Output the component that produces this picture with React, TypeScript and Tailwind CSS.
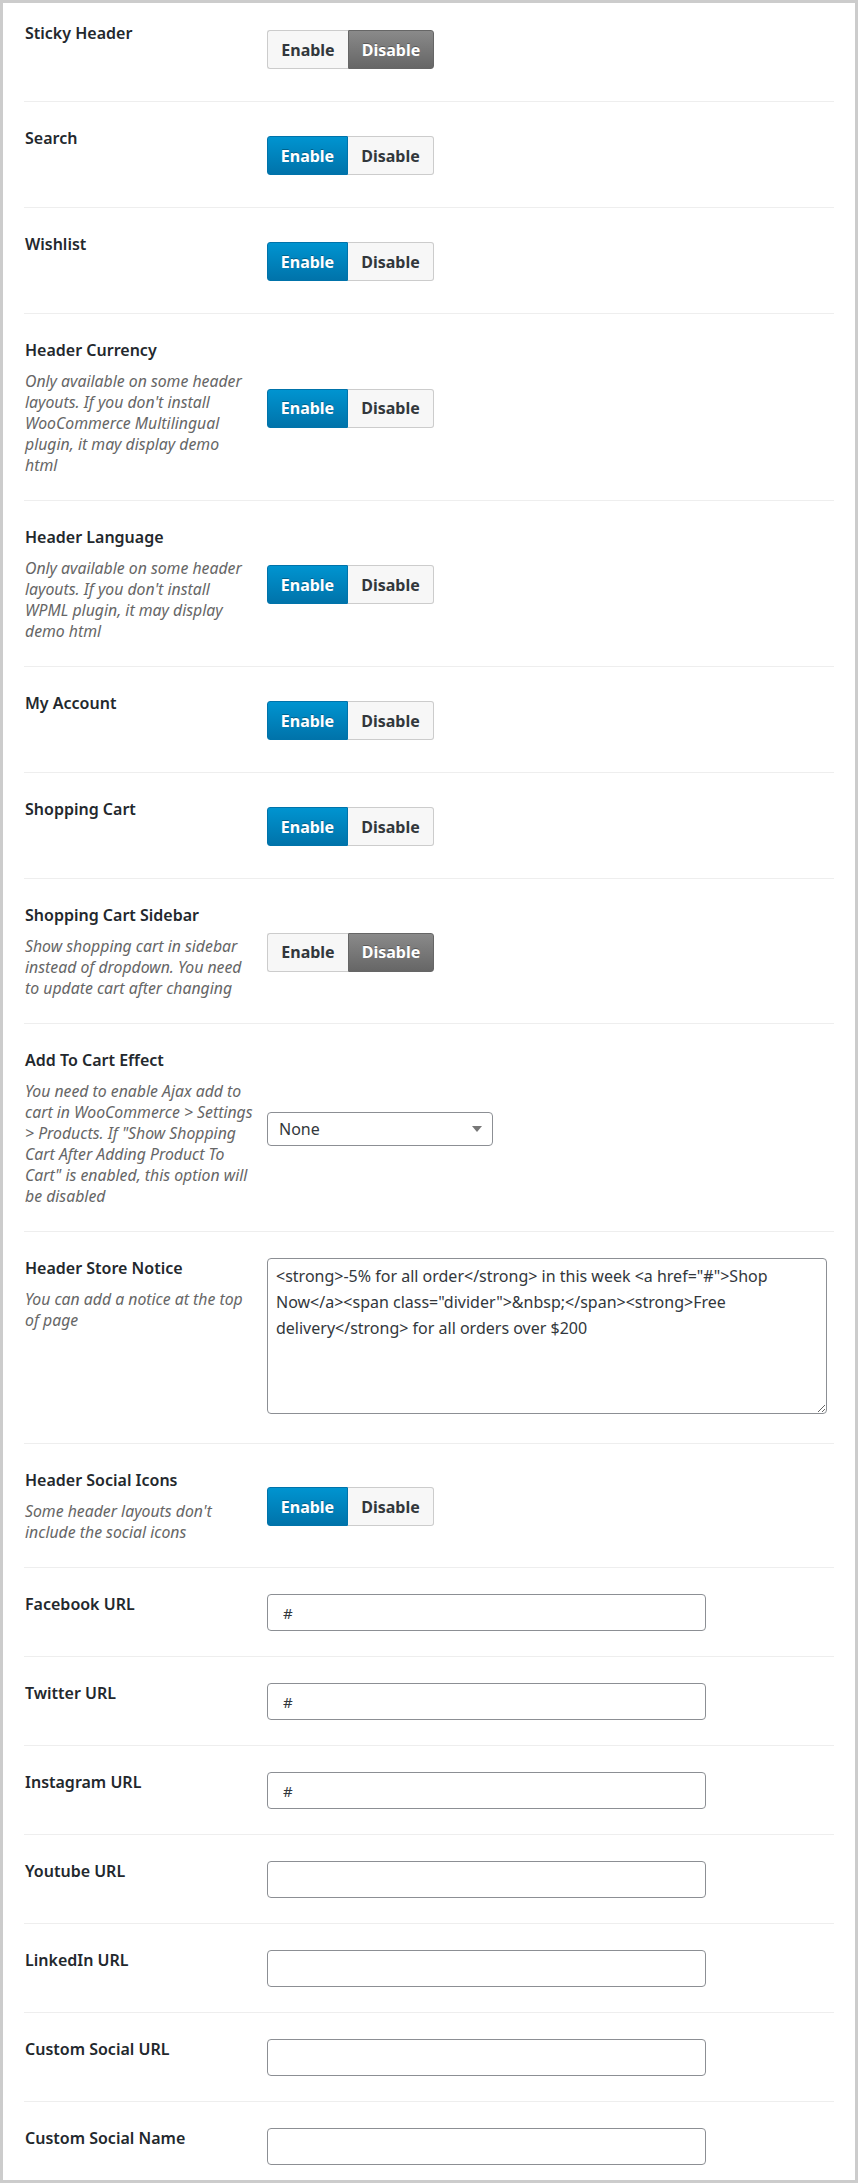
import type { ReactNode } from "react";

type Toggle = "enable" | "disable";

type Row =
  | { kind: "toggle"; label: string; desc?: string; value: Toggle }
  | { kind: "select"; label: string; desc?: string; value: string }
  | { kind: "textarea"; label: string; desc?: string; value: string }
  | { kind: "text"; label: string; desc?: string; value: string };

const ROWS: Row[] = [
  { kind: "toggle", label: "Sticky Header", value: "disable" },
  { kind: "toggle", label: "Search", value: "enable" },
  { kind: "toggle", label: "Wishlist", value: "enable" },
  {
    kind: "toggle",
    label: "Header Currency",
    desc: "Only available on some header layouts. If you don't install WooCommerce Multilingual plugin, it may display demo html",
    value: "enable",
  },
  {
    kind: "toggle",
    label: "Header Language",
    desc: "Only available on some header layouts. If you don't install WPML plugin, it may display demo html",
    value: "enable",
  },
  { kind: "toggle", label: "My Account", value: "enable" },
  { kind: "toggle", label: "Shopping Cart", value: "enable" },
  {
    kind: "toggle",
    label: "Shopping Cart Sidebar",
    desc: "Show shopping cart in sidebar instead of dropdown. You need to update cart after changing",
    value: "disable",
  },
  {
    kind: "select",
    label: "Add To Cart Effect",
    desc: 'You need to enable Ajax add to cart in WooCommerce > Settings > Products. If "Show Shopping Cart After Adding Product To Cart" is enabled, this option will be disabled',
    value: "None",
  },
  {
    kind: "textarea",
    label: "Header Store Notice",
    desc: "You can add a notice at the top of page",
    value:
      '<strong>-5% for all order</strong> in this week <a href="#">Shop Now</a><span class="divider">&nbsp;</span><strong>Free delivery</strong> for all orders over $200',
  },
  {
    kind: "toggle",
    label: "Header Social Icons",
    desc: "Some header layouts don't include the social icons",
    value: "enable",
  },
  { kind: "text", label: "Facebook URL", value: "#" },
  { kind: "text", label: "Twitter URL", value: "#" },
  { kind: "text", label: "Instagram URL", value: "#" },
  { kind: "text", label: "Youtube URL", value: "" },
  { kind: "text", label: "LinkedIn URL", value: "" },
  { kind: "text", label: "Custom Social URL", value: "" },
  { kind: "text", label: "Custom Social Name", value: "" },
];

function ToggleGroup({ value }: { value: Toggle }) {
  const base =
    "flex h-[39px] items-center justify-center border text-[16px] font-bold";
  const off = "border-[#cccccc] bg-[#f7f7f7] text-[#32373c]";
  const shadow = "[text-shadow:0_-1px_0_rgba(0,0,0,0.3)]";
  return (
    <div className="my-2 flex">
      <span
        className={`${base} w-[81px] rounded-l-[3px] ${
          value === "enable"
            ? `border-[#0073aa] bg-gradient-to-b from-[#0094d0] to-[#0073aa] text-white ${shadow}`
            : `${off} border-r-0`
        }`}
      >
        Enable
      </span>
      <span
        className={`${base} w-[86px] rounded-r-[3px] ${
          value === "disable"
            ? `border-[#666666] bg-gradient-to-b from-[#8a8a8a] to-[#666666] text-white ${shadow}`
            : `${off} border-l-0`
        }`}
      >
        Disable
      </span>
    </div>
  );
}

function Control({ row }: { row: Row }): ReactNode {
  if (row.kind === "toggle") return <ToggleGroup value={row.value} />;
  if (row.kind === "select")
    return (
      <div className="flex h-[34px] w-[226px] items-center justify-between rounded-[4px] border border-[#8c8f94] bg-white pl-[11px] pr-[10px] text-[16px] text-[#32373c]">
        <span>{row.value}</span>
        <svg width="10" height="6" viewBox="0 0 10 6">
          <path d="M0 0h10L5 6z" fill="#777" />
        </svg>
      </div>
    );
  if (row.kind === "textarea")
    return (
      <textarea
        readOnly
        value={row.value}
        className="mb-[5px] block h-[156px] w-[560px] resize-y rounded-[4px] border border-[#8c8f94] bg-white px-[8px] py-[4px] text-[16px] leading-[26px] text-[#32373c] outline-none"
      />
    );
  return (
    <input
      readOnly
      value={row.value}
      className="mb-px block h-[37px] w-[439px] rounded-[4px] border border-[#8c8f94] bg-white px-[15px] text-[15px] text-[#32373c] outline-none"
    />
  );
}

export default function App() {
  return (
    <div className="min-h-[2183px] bg-white font-['Noto_Sans','Open_Sans',sans-serif]">
      <div className="border-[3px] border-b-[4px] border-[#cccccc] bg-white px-[21px]">
        {ROWS.map((row, i) => {
          const first = i === 0;
          const last = i === ROWS.length - 1;
          return (
            <div
              key={row.label}
              className={`flex items-center ${
                last ? "" : "border-b border-[#eeeeee]"
              }`}
            >
              <div
                className={`w-[243px] shrink-0 self-start pl-[1px] pr-[14px] ${
                  first ? "pt-[20px]" : "pt-[26px]"
                } ${last ? "pb-[14px]" : "pb-[24px]"}`}
              >
                <div className="text-[16px] font-semibold leading-[21px] text-[#23282d]">
                  {row.label}
                </div>
                {row.desc ? (
                  <p className="mt-[10px] text-[15.8px] italic leading-[21px] text-[#666666]">
                    {row.desc}
                  </p>
                ) : null}
              </div>
              <div
                className={`flex-1 ${first ? "pt-[19px]" : "pt-[26px]"} ${
                  last ? "pb-[14px]" : "pb-[24px]"
                }`}
              >
                <Control row={row} />
              </div>
            </div>
          );
        })}
      </div>
    </div>
  );
}
